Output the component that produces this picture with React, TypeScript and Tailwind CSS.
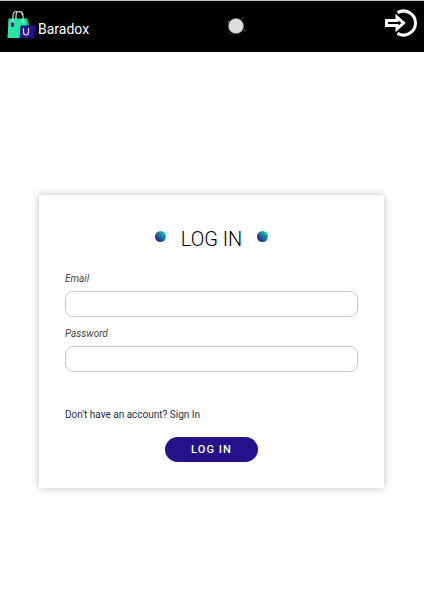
import { useState } from "react";

function BagLogo() {
  return (
    <svg width="29" height="30" viewBox="0 0 29 30" aria-hidden="true">
      <path d="M1.500 8.500H20L22 28H.5z" fill="#25e6a5" />
      <path d="M19 8.500l2 1 1 6h-3z" fill="#1cb98a" />
      <path d="M6 12V6q0-4.500 4-4.500M9 9V6q0-4.500 3.500-4.500T16 6v7M12 1.500q3 0 3.500 4" fill="none" stroke="#d5d5dc" strokeWidth="1.200" />
      <rect x="4" y="12.500" width="3" height="4.500" rx="1" fill="#24128a" />
      <path d="M13.500 15.500H28L27.500 28H12.500z" fill="#24128a" />
      <path d="M28 15.500L29 27l-2 1z" fill="#160a55" />
      <path d="M16.500 18v4q0 3 2.500 3t2.500-3v-4" fill="none" stroke="#e4dcf7" strokeWidth="1.200" />
    </svg>
  );
}

function Moon() {
  return (
    <svg width="20" height="20" viewBox="0 0 20 20" aria-hidden="true">
      <circle cx="10" cy="10" r="7.800" fill="#a9a7aa" />
      <circle cx="10" cy="10" r="7" fill="#e1dfe2" />
      <path d="M5 8l3-2M9 12l4 1M12 6l2 3M6 12l2 2" stroke="#d3d1d5" strokeWidth="1" />
      <path d="M16 2h1.500M3.500 17.500H5" stroke="#214a6c" strokeWidth="1.500" />
      <path d="M2.500 5v1.500M18.500 13.500V15" stroke="#9a7b20" strokeWidth="1.200" />
    </svg>
  );
}

function LoginIcon() {
  return (
    <svg width="34" height="30" viewBox="0 0 34 30" fill="none" stroke="#fff" aria-hidden="true">
      <path d="M14.500 4.600A12 12 0 1 1 14.500 25.400" strokeWidth="3" />
      <path d="M3.500 12.500H14V9.200L20.500 15L14 20.800V17.500H3.500Z" strokeWidth="3" />
    </svg>
  );
}

function Dot() {
  return <span className="size-[11px] rounded-full bg-linear-to-bl from-[#25e6a5] to-[#24128a] to-85%" />;
}

type FieldProps = {
  id: string;
  label: string;
  type: string;
  value: string;
  onChange: (value: string) => void;
};

function Field({ id, label, type, value, onChange }: FieldProps) {
  return (
    <div className="flex flex-col gap-[3px]">
      <label htmlFor={id} className="text-[10px] leading-[18px] text-[#444] italic">
        {label}
      </label>
      <input
        id={id}
        type={type}
        value={value}
        onChange={(event) => onChange(event.target.value)}
        className="h-[26px] w-full rounded-lg border border-[#c8c8c8] bg-white px-2 text-xs"
      />
    </div>
  );
}

export default function App() {
  const [email, setEmail] = useState("");
  const [password, setPassword] = useState("");

  return (
    <div className="min-h-screen bg-white font-['Roboto',sans-serif]">
      <header className="grid h-[52px] grid-cols-3 items-start border-t border-[#b9c0bd] bg-black px-[7px] text-white">
        <a href="#home" className="flex items-start gap-0.5 pt-[9px]">
          <BagLogo />
          <span className="pt-[9px] text-sm leading-5">Baradox</span>
        </a>
        <button type="button" aria-label="Toggle theme" className="mt-[15px] justify-self-center pl-12">
          <Moon />
        </button>
        <a href="#login" aria-label="Log in" className="mt-[7px] justify-self-end">
          <LoginIcon />
        </a>
      </header>

      <main className="pt-[143px] pr-10 pl-[39px]">
        <form
          onSubmit={(event) => event.preventDefault()}
          className="flex flex-col bg-white p-[26px] shadow-[0_0_8px_rgba(0,0,0,0.25)]"
        >
          <div className="flex h-[34px] items-start justify-center gap-[15px] pt-2.5">
            <Dot />
            <h1 className="text-xl leading-4 font-light text-black">LOG IN</h1>
            <Dot />
          </div>
          <div className="mt-[15px] flex flex-col gap-2">
            <Field id="email" label="Email" type="email" value={email} onChange={setEmail} />
            <Field id="password" label="Password" type="password" value={password} onChange={setPassword} />
          </div>
          <a href="#signin" className="mt-[34px] self-start text-[10px] leading-[18px] text-[#17324d]">
            Don't have an account? Sign In
          </a>
          <button
            type="submit"
            className="mt-[13px] h-[25px] w-[93px] self-center rounded-full bg-[#24128a] pt-0.5 text-[11px] font-medium tracking-widest text-white"
          >
            LOG IN
          </button>
        </form>
      </main>
    </div>
  );
}
